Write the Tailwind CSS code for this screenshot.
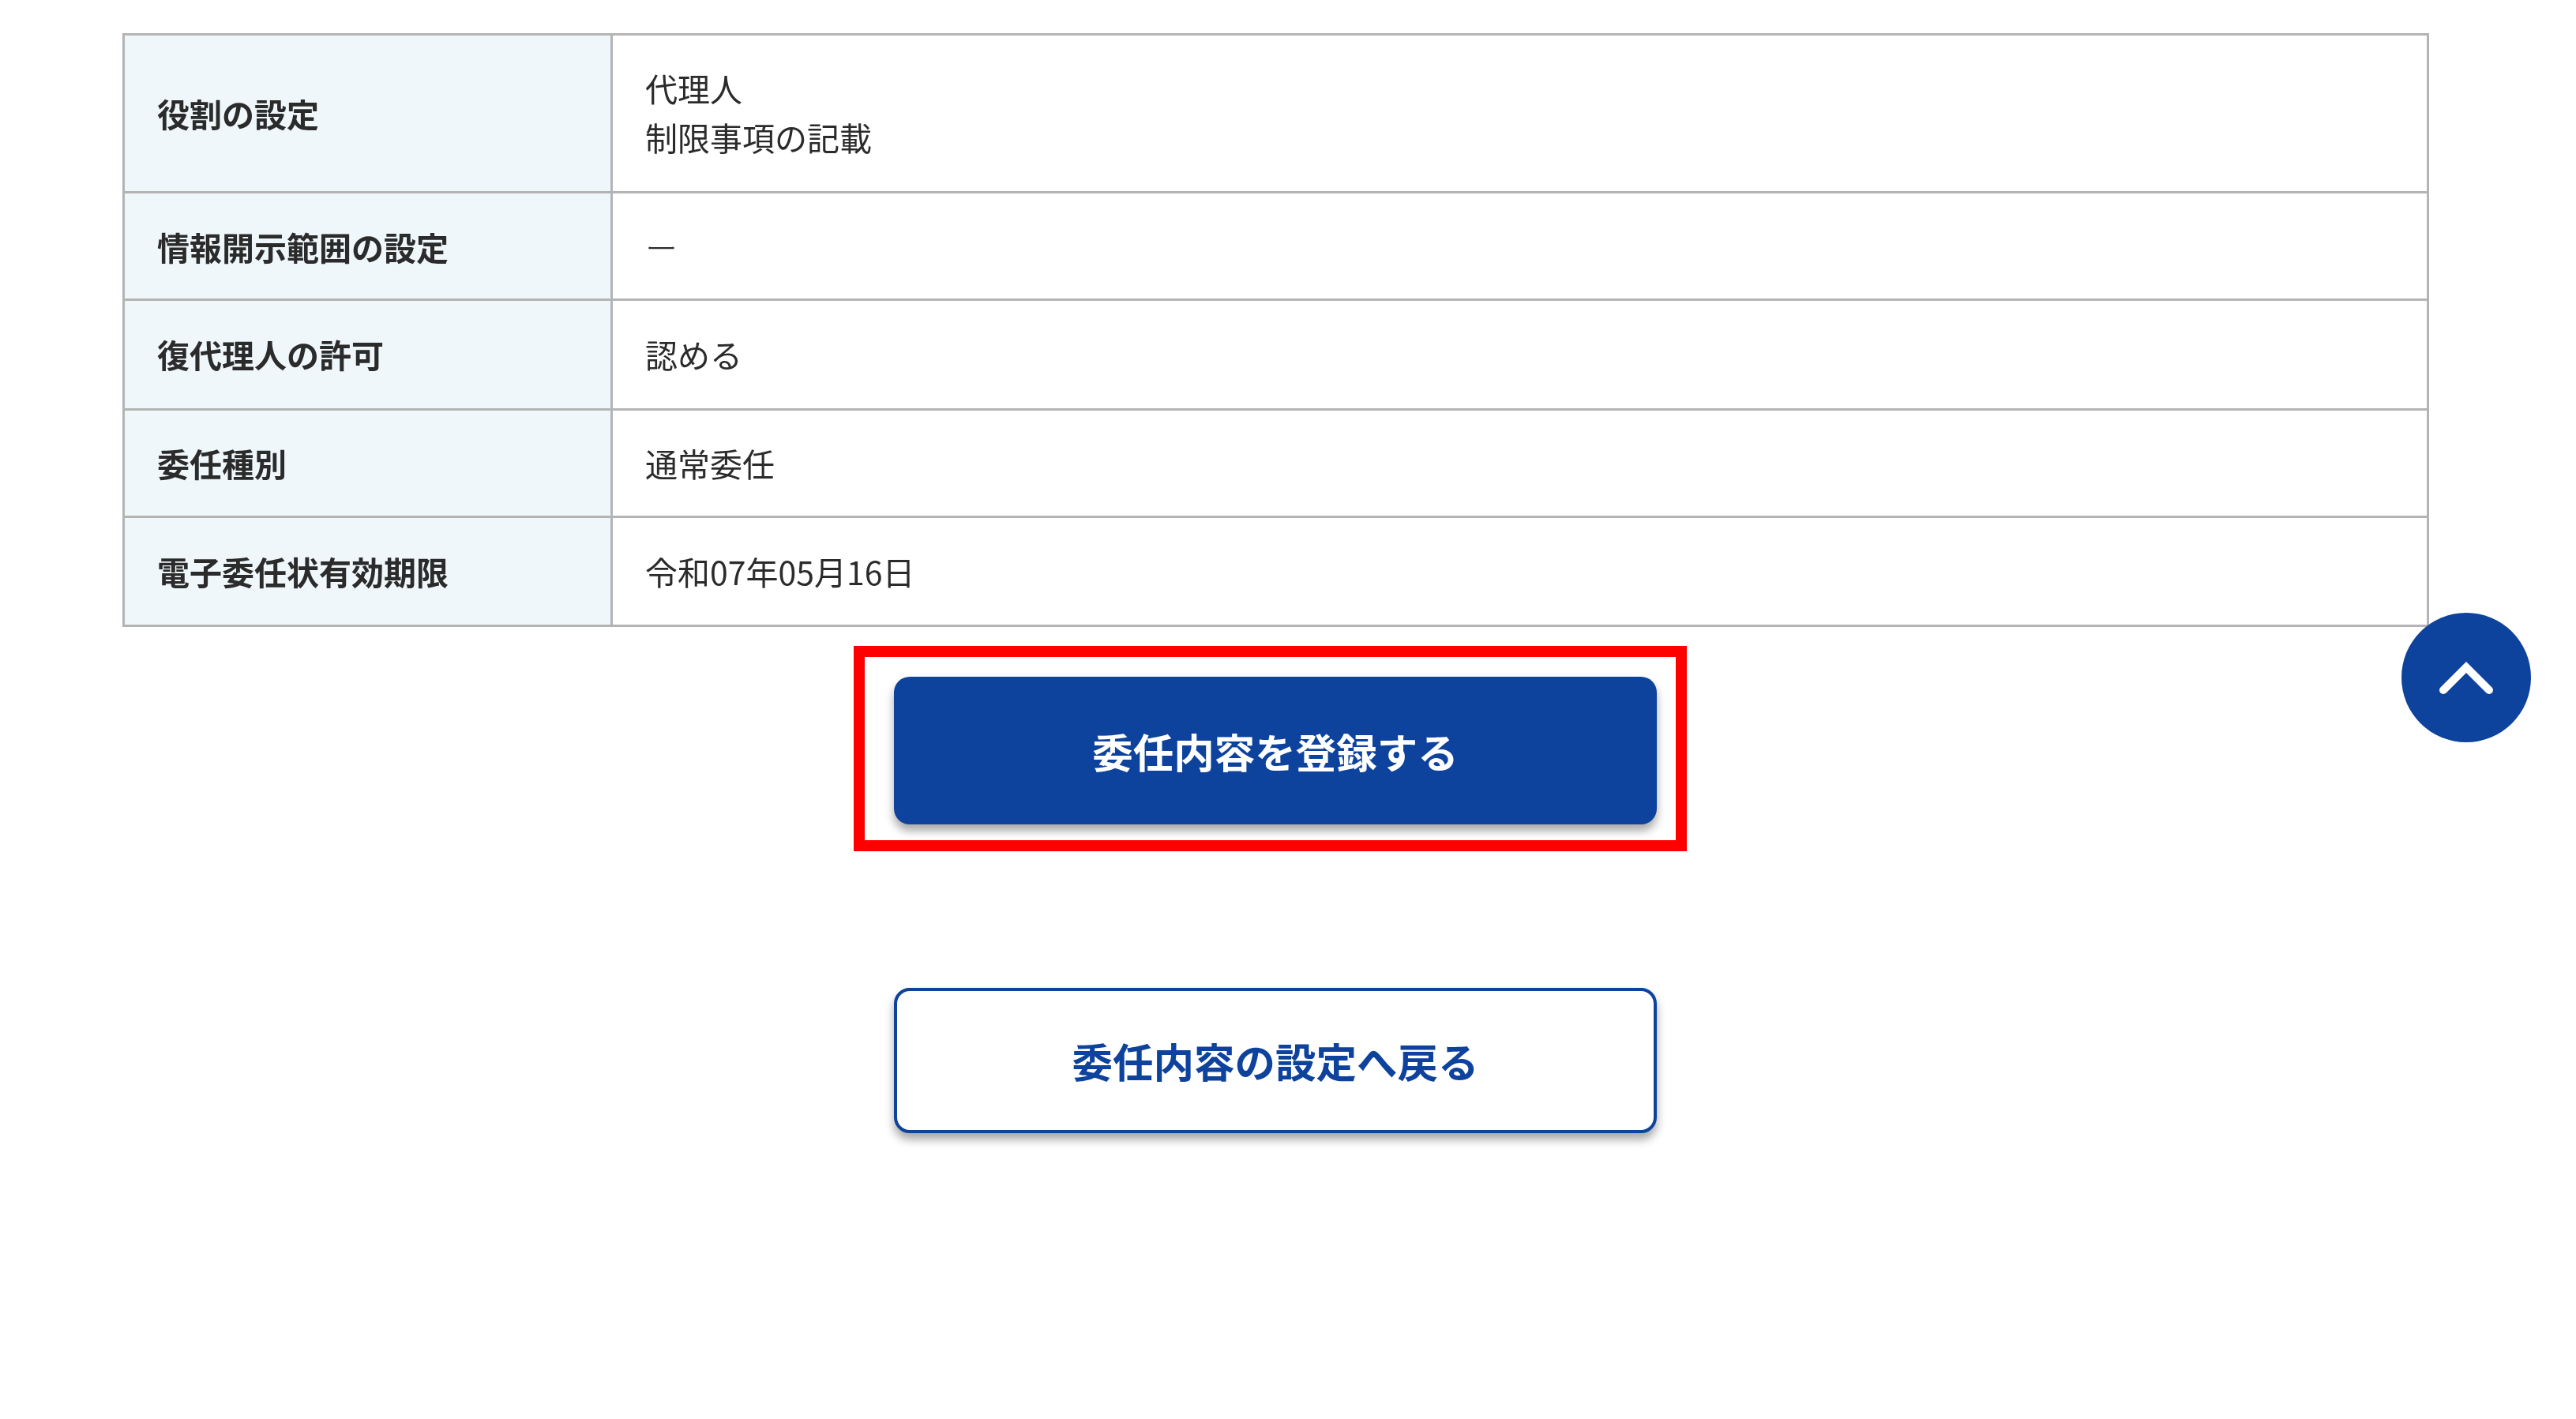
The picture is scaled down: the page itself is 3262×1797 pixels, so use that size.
<!DOCTYPE html>
<html lang="ja">
<head>
    <meta charset="UTF-8">
    <title>委任内容の確認</title>
    <script src="https://cdn.jsdelivr.net/npm/@tailwindcss/browser@4"></script>
</head>
<body class="relative bg-white h-[1797px] overflow-hidden font-['Noto_Sans_CJK_JP',sans-serif] text-[#2b2b2b]">
    <main class="pt-[42px] pl-[155px] w-[3076px] flex flex-col items-center">
        <!-- Summary table -->
        <table class="w-full table-fixed border-collapse border-[3px] border-[#b4b4b4] text-[41px] blur-[0.7px]">
            <tbody>
                <tr class="h-[200px]">
                    <th class="w-[618px] bg-[#eff7fb] border-[3px] border-[#b4b4b4] pl-[41px] text-left font-bold">役割の設定</th>
                    <td class="border-[3px] border-[#b4b4b4] pl-[41px] pb-[4px] leading-[62px]">代理人<br>制限事項の記載</td>
                </tr>
                <tr class="h-[136px]">
                    <th class="bg-[#eff7fb] border-[3px] border-[#b4b4b4] pl-[41px] pt-[2px] text-left font-bold">情報開示範囲の設定</th>
                    <td class="border-[3px] border-[#b4b4b4] pl-[41px] pt-[3px] font-light">ー</td>
                </tr>
                <tr class="h-[139px]">
                    <th class="bg-[#eff7fb] border-[3px] border-[#b4b4b4] pl-[41px] text-left font-bold">復代理人の許可</th>
                    <td class="border-[3px] border-[#b4b4b4] pl-[41px]">認める</td>
                </tr>
                <tr class="h-[136px]">
                    <th class="bg-[#eff7fb] border-[3px] border-[#b4b4b4] pl-[41px] text-left font-bold">委任種別</th>
                    <td class="border-[3px] border-[#b4b4b4] pl-[41px]">通常委任</td>
                </tr>
                <tr class="h-[138px]">
                    <th class="bg-[#eff7fb] border-[3px] border-[#b4b4b4] pl-[41px] text-left font-bold">電子委任状有効期限</th>
                    <td class="border-[3px] border-[#b4b4b4] pl-[41px]">令和07年05月16日</td>
                </tr>
            </tbody>
        </table>

        <!-- Buttons -->
        <div class="relative mt-[63px] mr-[1px]">
            <button class="block w-[966px] h-[187px] rounded-[20px] bg-[#0d429d] text-white text-[51.5px] font-bold shadow-[0_8px_12px_rgba(0,0,0,0.35)] blur-[0.7px]">委任内容を登録する</button>
            <span class="absolute left-[-51px] right-[-38px] top-[-39px] bottom-[-34px] border-[14px] border-[#ff0000]"></span>
        </div>
        <button class="mt-[207px] mr-[1px] w-[966px] h-[184px] rounded-[20px] bg-white border-[4px] border-[#0d429d] text-[#0d429d] text-[51.5px] font-bold shadow-[0_8px_12px_rgba(0,0,0,0.35)] blur-[0.7px]">委任内容の設定へ戻る</button>
    </main>

    <!-- Back to top -->
    <a href="#" class="absolute left-[3041px] top-[776px] w-[164px] h-[164px] rounded-full bg-[#0d429d] flex items-center justify-center">
        <svg class="w-[80px] h-[56px]" viewBox="0 0 80 56" fill="none" stroke="#ffffff" stroke-width="10" stroke-linecap="round" stroke-linejoin="miter">
            <path d="M11 44 L40 15 L69 44"/>
        </svg>
    </a>
</body>
</html>
